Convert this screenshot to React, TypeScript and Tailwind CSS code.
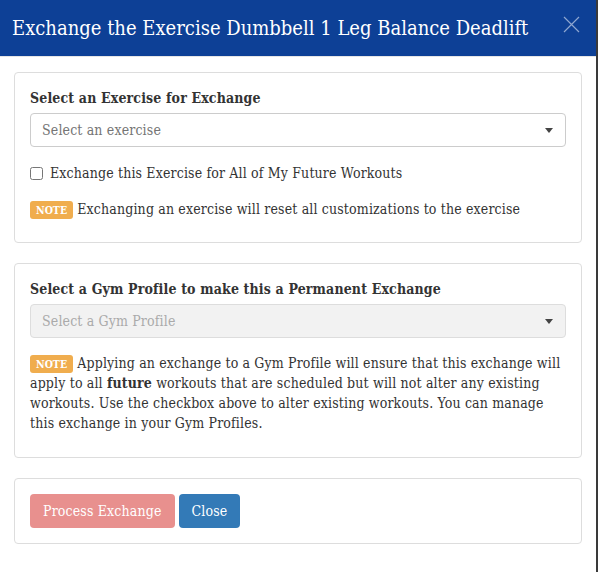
import React, { useState } from 'react';

const font = { fontFamily: '"DejaVu Serif Condensed", "DejaVu Serif", "Liberation Serif", serif' };

function Note() {
  return (
    <span className="inline-block rounded-[3px] bg-[#f0ad4e] px-[6px] py-[2px] text-[10.5px] font-bold leading-[14px] tracking-normal text-white">
      NOTE
    </span>
  );
}

function Caret() {
  return <span className="h-0 w-0 border-x-[4px] border-t-[5px] border-x-transparent border-t-[#444]" />;
}

export default function App() {
  const [all, setAll] = useState(false);

  return (
    <div className="h-[572px] w-[598px] overflow-hidden border-r-2 border-r-[#3a3a3a] bg-white text-[14px] leading-[20px] tracking-[0.15px] text-[#333] font-stretch-condensed" style={font}>
      <div className="flex h-[57px] items-center justify-between border-b border-[#e5e5e5] bg-[#0d4096] pl-[12px] pr-[16px]">
        <h4 className="text-[20px] leading-[26px] tracking-normal text-white">Exchange the Exercise Dumbbell 1 Leg Balance Deadlift</h4>
        <svg width="17" height="17" viewBox="0 0 17 17" className="mb-[7px]">
          <path d="M1 1L16 16M16 1L1 16" stroke="#8ea6d0" strokeWidth="1.2" />
        </svg>
      </div>

      <div className="flex flex-col gap-[20px] px-[14px] pt-[15px]">
        <div className="rounded-[4px] border border-[#ddd] px-[15px] pb-[23px] pt-[15px]">
          <label className="mb-[5px] block font-bold">Select an Exercise for Exchange</label>
          <div className="flex h-[34px] items-center justify-between rounded-[4px] border border-[#ccc] pl-[11px] pr-[12px] text-[#757575]">
            <span>Select an exercise</span>
            <Caret />
          </div>
          <label className="mt-[16px] flex items-center gap-[7px]">
            <input
              type="checkbox"
              checked={all}
              onChange={(e) => setAll(e.target.checked)}
              className="m-0 h-[13px] w-[13px]"
            />
            <span>Exchange this Exercise for All of My Future Workouts</span>
          </label>
          <p className="mt-[16px]">
            <Note /> Exchanging an exercise will reset all customizations to the exercise
          </p>
        </div>

        <div className="rounded-[4px] border border-[#ddd] px-[15px] pb-[24px] pt-[15px]">
          <label className="mb-[5px] block font-bold">Select a Gym Profile to make this a Permanent Exchange</label>
          <div className="flex h-[34px] items-center justify-between rounded-[4px] border border-[#ddd] bg-[#f2f2f2] pl-[11px] pr-[12px] text-[#aaa]">
            <span>Select a Gym Profile</span>
            <Caret />
          </div>
          <p className="mt-[15px]">
            <Note /> Applying an exchange to a Gym Profile will ensure that this exchange will apply to all <b>future</b>{' '}
            workouts that are scheduled but will not alter any existing workouts. Use the checkbox above to alter
            existing workouts. You can manage this exchange in your Gym Profiles.
          </p>
        </div>

        <div className="flex gap-[4px] rounded-[4px] border border-[#ddd] p-[15px]">
          <button disabled className="h-[34px] rounded-[4px] bg-[#e8908e] px-[13px] text-white">
            Process Exchange
          </button>
          <button className="h-[34px] rounded-[4px] bg-[#337ab7] px-[13px] text-white">Close</button>
        </div>
      </div>
    </div>
  );
}
